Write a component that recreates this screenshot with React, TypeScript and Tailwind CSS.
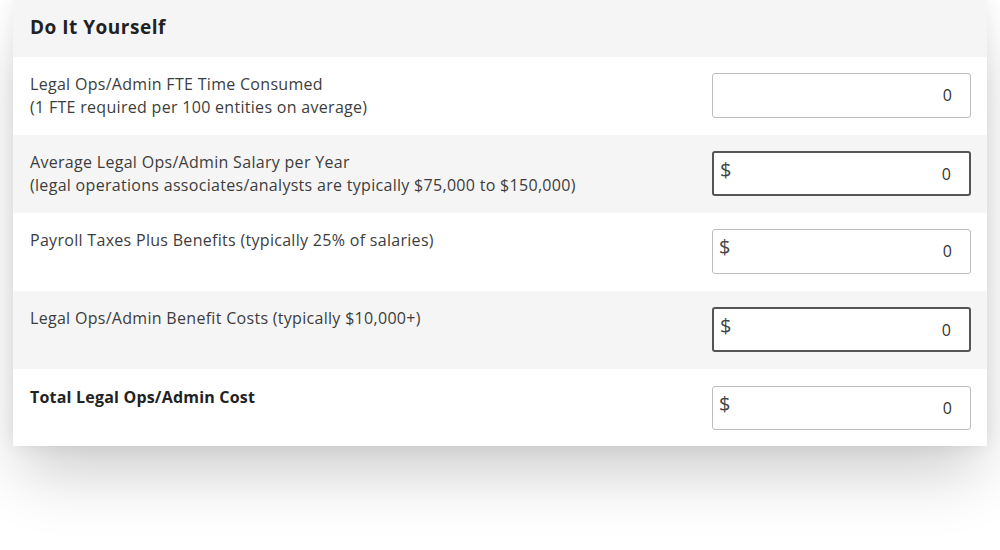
export default function App()
{
  const rows = [
    {
      label: 'Legal Ops/Admin FTE Time Consumed',
      note: '(1 FTE required per 100 entities on average)',
      dollar: false,
      dark: false,
      gray: false,
    },
    {
      label: 'Average Legal Ops/Admin Salary per Year',
      note: '(legal operations associates/analysts are typically $75,000 to $150,000)',
      dollar: true,
      dark: true,
      gray: true,
    },
    {
      label: 'Payroll Taxes Plus Benefits (typically 25% of salaries)',
      note: '',
      dollar: true,
      dark: false,
      gray: false,
    },
    {
      label: 'Legal Ops/Admin Benefit Costs (typically $10,000+)',
      note: '',
      dollar: true,
      dark: true,
      gray: true,
    },
  ]

  return (
    <main className="min-h-[550px] w-[1000px] bg-white font-['Open_Sans',sans-serif] text-[#333]">
      <div className="px-[13px]">
        <div className="bg-white shadow-[0_34px_60px_-8px_rgba(0,0,0,0.2),0_0_16px_rgba(0,0,0,0.07)]">

          <div className="h-[57px] bg-[#f5f5f5] pl-[17px] flex items-center">
            <h1 className="-mt-[3px] text-[19px] font-bold text-[#222] tracking-[0.5px]">
              Do It Yourself
            </h1>
          </div>

          {rows.map((row) => (
            <div
              key={row.label}
              className={`h-[78px] flex justify-between pl-[17px] pr-[16px] pt-[16px] ${row.gray ? 'bg-[#f5f5f5]' : 'bg-white'}`}
            >
              <div className="text-[16px] leading-[23px] tracking-[0.3px] text-[#3d3d3d]">
                <p>{row.label}</p>
                {row.note && <p>{row.note}</p>}
              </div>

              <div
                className={`relative w-[259px] h-[45px] rounded-[3px] bg-white ${row.dark ? 'border-2 border-[#555]' : 'border border-[#bdbdbd]'}`}
              >
                {row.dollar && (
                  <span className="absolute left-[6px] top-[7px] text-[20px] leading-none text-[#444]">
                    $
                  </span>
                )}
                <span className="absolute right-[18px] top-[13px] text-[16px] leading-none text-[#333]">
                  0
                </span>
              </div>
            </div>
          ))}

          <div className="h-[77px] flex justify-between pl-[17px] pr-[16px] pt-[17px] bg-white">
            <p className="text-[16px] leading-[23px] font-bold tracking-[0.2px] text-[#222]">
              Total Legal Ops/Admin Cost
            </p>
            <div className="relative w-[259px] h-[44px] rounded-[3px] bg-white border border-[#bdbdbd]">
              <span className="absolute left-[6px] top-[7px] text-[20px] leading-none text-[#444]">
                $
              </span>
              <span className="absolute right-[18px] top-[13px] text-[16px] leading-none text-[#333]">
                0
              </span>
            </div>
          </div>

        </div>
      </div>
    </main>
  )
}
